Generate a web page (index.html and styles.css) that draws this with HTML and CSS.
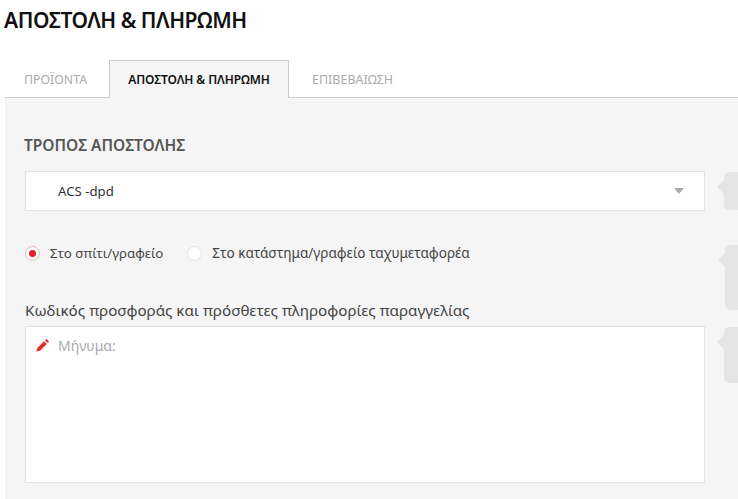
FILE: index.html
```
<!DOCTYPE html>
<html lang="el">
<head>
<meta charset="utf-8">
<title>Αποστολή &amp; Πληρωμή</title>
<link rel="stylesheet" href="styles.css">
</head>
<body>
<h1 class="page-title">ΑΠΟΣΤΟΛΗ &amp; ΠΛΗΡΩΜΗ</h1>
<div class="tabs">
  <span class="tab">ΠΡΟΪΟΝΤΑ</span>
  <span class="tab tab-active">ΑΠΟΣΤΟΛΗ &amp; ΠΛΗΡΩΜΗ</span>
  <span class="tab">ΕΠΙΒΕΒΑΙΩΣΗ</span>
</div>
<main class="panel">
  <div class="main-col">
    <h2 class="section-title">ΤΡΟΠΟΣ ΑΠΟΣΤΟΛΗΣ</h2>
    <div class="select"><span>ACS -dpd</span><i class="caret"></i></div>
    <div class="radios">
      <label class="radio"><i class="dot dot-on"></i>Στο σπίτι/γραφείο</label>
      <label class="radio radio-wide"><i class="dot"></i>Στο κατάστημα/γραφείο ταχυμεταφορέα</label>
    </div>
    <p class="field-label">Κωδικός προσφοράς και πρόσθετες πληροφορίες παραγγελίας</p>
    <div class="textarea">
      <svg class="pencil" viewBox="0 0 14 14" width="13" height="13"><path fill="#e52b2b" d="M0.5 13.5l.9-3.9 7.3-7.3 3 3-7.3 7.3zM9.6 1.4l.9-.9c.4-.4 1-.4 1.4 0l1.6 1.6c.4.4.4 1 0 1.4l-.9.9z"/></svg>
      <span>Μήνυμα:</span>
    </div>
  </div>
  <aside class="notes">
    <div class="note note-a"></div>
    <div class="note note-b"></div>
    <div class="note note-c"></div>
  </aside>
</main>
</body>
</html>
```
FILE: styles.css
```
* { box-sizing: border-box; }
html, body { margin: 0; height: 100%; overflow: hidden; }
body {
  background: #fff;
  font-family: "Noto Sans", "Open Sans", sans-serif;
  color: #333;
}
.page-title {
  margin: 0;
  padding: 5px 0 0 4px;
  height: 60px;
  font-size: 21px;
  line-height: 30px;
  font-weight: 600;
  color: #111;
  letter-spacing: -0.45px;
}
.tabs {
  display: flex;
  height: 38px;
  margin-left: 5px;
  border-bottom: 1px solid #ccc;
}
.tab {
  width: 104px;
  padding-top: 11px;
  font-size: 12.3px;
  line-height: 18px;
  color: #aaa;
  text-align: center;
}
.tab-active {
  width: 180px;
  height: 38px;
  background: #f5f5f5;
  border: 1px solid #ccc;
  border-bottom: 0;
  padding-top: 10px;
  font-size: 12px;
  letter-spacing: -0.1px;
  font-weight: 600;
  color: #111;
}
.tab:first-child { padding-right: 3px; }
.tab:last-child { width: 104px; margin-left: 23px; white-space: nowrap; text-align: left; font-size: 12.5px; }
.panel {
  display: flex;
  margin-left: 5px;
  height: 402px;
  background: #f5f5f5;
  padding: 0 0 0 20px;
}
.main-col { width: 680px; flex: none; }
.section-title {
  margin: 0 0 0 -1px;
  padding-top: 36px;
  font-size: 15.5px;
  line-height: 22px;
  font-weight: 600;
  color: #555;
  height: 73px;
}
.select {
  display: flex;
  align-items: center;
  justify-content: space-between;
  height: 40px;
  background: #fff;
  border: 1px solid #e3e3de;
  padding: 0 20px 0 32px;
  font-size: 13.2px;
  color: #333;
}
.caret {
  border-left: 5px solid transparent;
  border-right: 5px solid transparent;
  border-top: 6px solid #aaa;
}
.radios {
  display: flex;
  gap: 24px;
  margin-top: 32px;
  height: 20px;
  align-items: center;
}
.radio {
  display: flex;
  align-items: center;
  gap: 10px;
  font-size: 13.3px;
  color: #444;
}
.radio-wide { font-size: 13.55px; }
.dot {
  width: 15px;
  height: 15px;
  border-radius: 50%;
  background: #fff;
  border: 1px solid #e2e2e2;
  display: flex;
  align-items: center;
  justify-content: center;
}
.dot-on { border-color: #e6b5b5; }
.dot-on::after {
  content: "";
  width: 7px;
  height: 7px;
  border-radius: 50%;
  background: #e01f26;
}
.field-label {
  margin: 36px 0 0;
  height: 27px;
  font-size: 15.2px;
  line-height: 22px;
  color: #444;
}
.textarea {
  display: flex;
  gap: 9px;
  align-items: flex-start;
  height: 157px;
  background: #fff;
  border: 1px solid #e3e3de;
  padding: 9px 10px;
  font-size: 14px;
  line-height: 20px;
  color: #aaa;
}
.pencil { margin-top: 3px; }
.notes { flex: 1; position: relative; }
.note {
  position: absolute;
  left: 19px;
  right: 0;
  background: #e5e5e5;
  border-radius: 5px 0 0 5px;
}
.note::before {
  content: "";
  position: absolute;
  left: -7px;
  top: 8px;
  border-top: 7px solid transparent;
  border-bottom: 7px solid transparent;
  border-right: 7px solid #e5e5e5;
}
.note-a { top: 74px; height: 38px; }
.note-b { top: 147px; height: 65px; left: 20px; }
.note-c { top: 229px; height: 56px; }
```
